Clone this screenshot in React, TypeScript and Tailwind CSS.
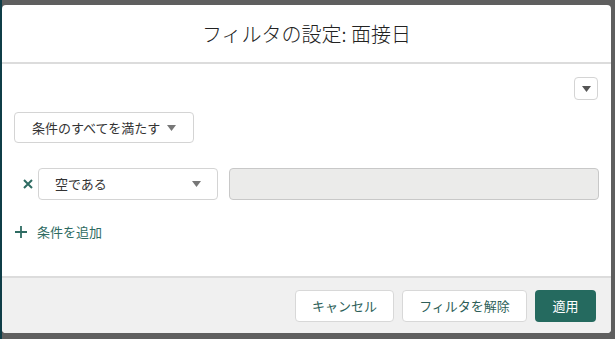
import React from 'react';

const font = { fontFamily: '"Noto Sans CJK JP", "Noto Sans", sans-serif' };

const Caret: React.FC<{ className?: string }> = ({ className }) => (
    <svg width="9" height="6" viewBox="0 0 9 6" className={className}>
        <path d="M0 0 H9 L4.5 6 Z" fill="currentColor" />
    </svg>
);

export default function App() {
    return (
        <div className="flex h-[339px] w-[615px] overflow-hidden bg-[#5f5f5f]" style={font}>
            {/* 背景の左端 */}
            <div className="w-[2px] bg-[#0f3d47]" />

            <div className="flex flex-col pt-[5px] pb-[6px] pr-[4px]">
                {/* モーダル */}
                <div className="flex h-[328px] w-[609px] flex-col overflow-hidden rounded-[4px] bg-white">
                    {/* ヘッダー */}
                    <header className="border-b-2 border-[#dcdcdc] pt-[15px] pb-[14px] text-center text-[20px] font-light leading-[28px] text-[#222]">
                        フィルタの設定: 面接日
                    </header>

                    {/* 本文 */}
                    <div className="flex flex-1 flex-col px-[12px] pt-[13px]">
                        <div className="flex justify-end pr-[1px]">
                            <button className="flex h-[23px] w-[24px] items-center justify-center rounded-[4px] border border-[#d4d4d4] text-[#555]">
                                <Caret />
                            </button>
                        </div>

                        <button className="mt-[12px] flex h-[31px] w-[180px] items-center gap-[7px] rounded-[4px] border border-[#d4d4d4] pl-[17px] text-[13px] text-[#333]">
                            条件のすべてを満たす
                            <Caret className="text-[#777]" />
                        </button>

                        <div className="mt-[25px] flex items-center">
                            <span className="flex w-[24px] justify-center pl-[4px] text-[#2e6b62]">
                                <svg width="10" height="10" viewBox="0 0 10 10">
                                    <path d="M1 1 L9 9 M9 1 L1 9" stroke="currentColor" strokeWidth="2" />
                                </svg>
                            </span>
                            <div className="flex h-[32px] w-[180px] items-center justify-between rounded-[4px] border border-[#d4d4d4] pl-[16px] pr-[16px] text-[13px] text-[#333]">
                                空である
                                <Caret className="text-[#777]" />
                            </div>
                            <div className="ml-[11px] h-[32px] w-[371px] rounded-[4px] border border-[#c8c8c8] bg-[#ebebea]" />
                        </div>

                        <button className="mt-[22px] flex items-center gap-[10px] pl-[1px] text-[13px] text-[#2e6b62]">
                            <svg width="12" height="12" viewBox="0 0 12 12">
                                <path d="M6 0 V12 M0 6 H12" stroke="currentColor" strokeWidth="1.8" />
                            </svg>
                            条件を追加
                        </button>
                    </div>

                    {/* フッター */}
                    <footer className="flex h-[57px] items-center justify-end gap-[8px] border-t-2 border-[#dcdcdc] bg-[#f0f0f0] pr-[15px]">
                        <button className="h-[32px] w-[99px] rounded-[4px] border border-[#d8d8d8] bg-white text-[13px] text-[#2e5f59]">
                            キャンセル
                        </button>
                        <button className="h-[32px] w-[125px] rounded-[4px] border border-[#d8d8d8] bg-white text-[13px] text-[#2e5f59]">
                            フィルタを解除
                        </button>
                        <button className="h-[32px] w-[61px] rounded-[4px] bg-[#256a5f] text-[13px] text-white">
                            適用
                        </button>
                    </footer>
                </div>
            </div>
        </div>
    );
}
